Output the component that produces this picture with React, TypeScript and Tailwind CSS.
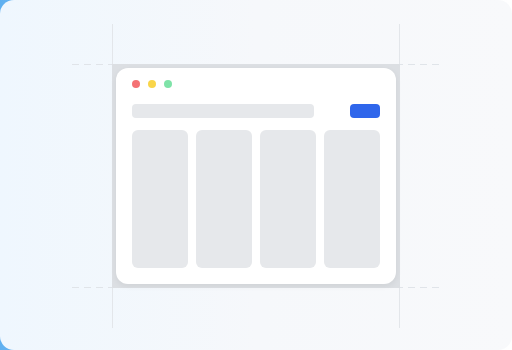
const App = () => {
  return (
    <div className="w-[512px] h-[350px] bg-gradient-to-r from-[#5fb0f0] via-[#eef6fe] to-[#ffffff]">
      <div className="w-full h-full rounded-[14px] overflow-hidden bg-gradient-to-r from-[#eff7fe] via-[#f6f8fb] to-[#f8f9fb] flex justify-center pt-[64px]">
        {/* Frame with guides */}
        <div className="relative w-[288px] h-[224px]">
          {/* vertical guides */}
          <div className="absolute left-0 top-[-40px] bottom-[-40px] w-px bg-[#e3e6ea]" />
          <div className="absolute right-0 top-[-40px] bottom-[-40px] w-px bg-[#e3e6ea]" />
          {/* horizontal dashed guides */}
          <div className="absolute top-0 left-[-40px] right-[-40px] h-px bg-[repeating-linear-gradient(90deg,#e0e4e9_0_7px,transparent_7px_12px)]" />
          <div className="absolute bottom-0 left-[-40px] right-[-40px] h-px bg-[repeating-linear-gradient(90deg,#e0e4e9_0_7px,transparent_7px_12px)]" />

          <div className="relative w-full h-full bg-[#dcdfe3] p-1">
            <div className="w-full h-full bg-white rounded-xl shadow-[0_2px_6px_rgba(0,0,0,0.06)] flex flex-col px-4 pt-3 pb-4">
              {/* window dots */}
              <div className="flex gap-2">
                <span className="w-2 h-2 rounded-full bg-[#f47174]" />
                <span className="w-2 h-2 rounded-full bg-[#f9d549]" />
                <span className="w-2 h-2 rounded-full bg-[#7fe3a8]" />
              </div>

              {/* toolbar */}
              <div className="flex items-center justify-between mt-4">
                <div className="w-[182px] h-[14px] rounded bg-[#e6e8eb]" />
                <div className="w-[30px] h-[14px] rounded bg-[#2f66eb]" />
              </div>

              {/* columns */}
              <div className="flex-1 grid grid-cols-4 gap-2 mt-3">
                <div className="rounded-md bg-[#e6e8eb]" />
                <div className="rounded-md bg-[#e6e8eb]" />
                <div className="rounded-md bg-[#e6e8eb]" />
                <div className="rounded-md bg-[#e6e8eb]" />
              </div>
            </div>
          </div>
        </div>
      </div>
    </div>
  );
};

export default App;
